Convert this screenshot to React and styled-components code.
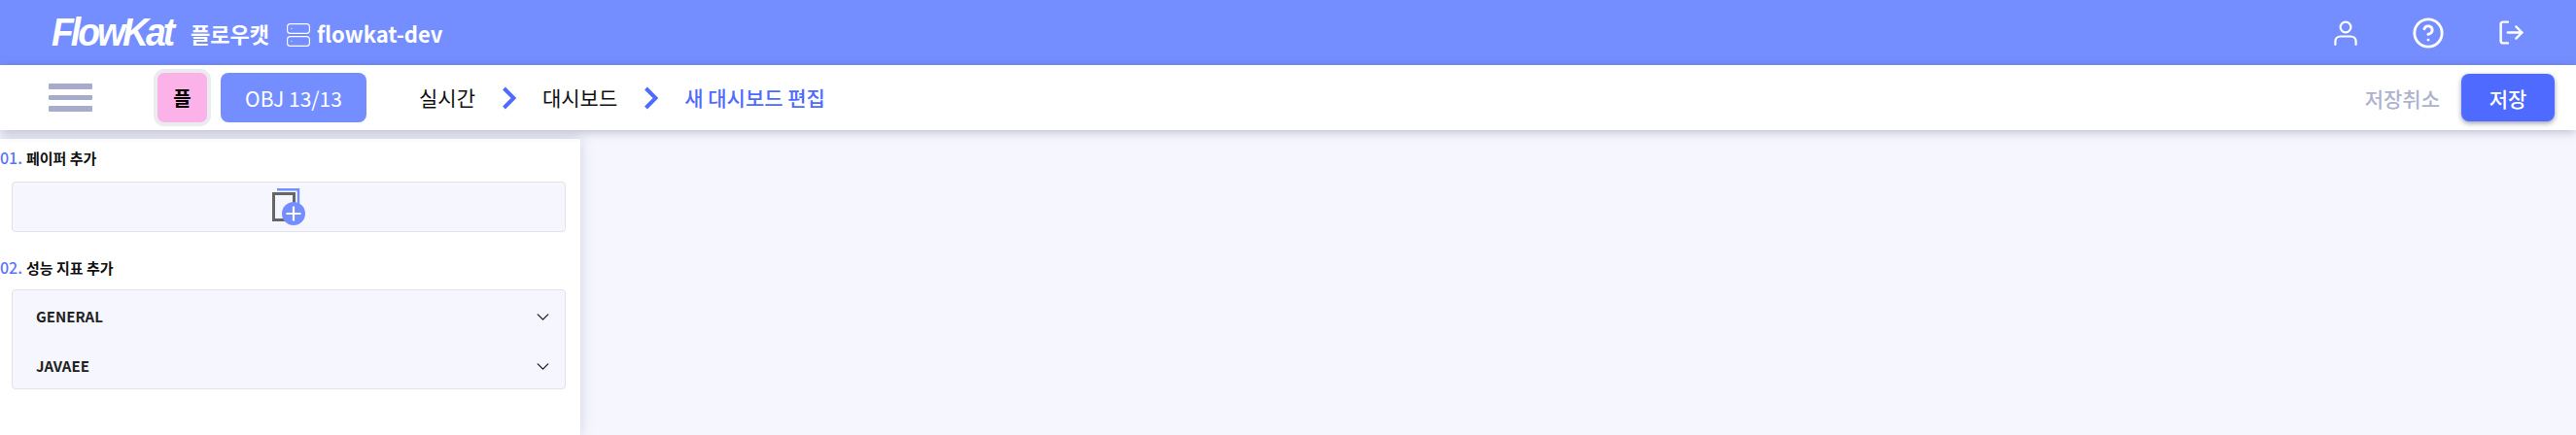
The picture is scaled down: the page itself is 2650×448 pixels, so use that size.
import React from 'react'
import styled, { createGlobalStyle } from 'styled-components'
import { CircleHelp, LogOut, ChevronDown } from 'lucide-react'

const Global = createGlobalStyle`
  html, body {
    margin: 0;
    padding: 0;
    height: 100%;
    overflow: hidden;
    background: #f6f7fe;
  }
  #root {
    height: 100%;
  }
  * {
    box-sizing: border-box;
  }
`

const Page = styled.div`
  width: 2650px;
  height: 448px;
  display: flex;
  flex-direction: column;
  font-family: 'Noto Sans CJK KR', 'Noto Sans', sans-serif;
  background: #f6f7fe;
`

const TopBar = styled.header`
  height: 67px;
  flex: none;
  display: flex;
  align-items: center;
  justify-content: space-between;
  background: #758eff;
  color: #fff;
  padding: 0 52px 0 53px;
`

const Brand = styled.div`
  display: flex;
  align-items: center;
`

const Logo = styled.span`
  font-family: 'Liberation Sans', sans-serif;
  font-style: italic;
  font-weight: 700;
  font-size: 38px;
  letter-spacing: -3px;
  width: 143px;
  transform: scaleX(0.98) scaleY(1.08);
  transform-origin: left center;
  white-space: nowrap;
`

const BrandName = styled.span`
  font-size: 22px;
  font-weight: 700;
  width: 81px;
  white-space: nowrap;
`

const ServerIcon = styled.svg`
  width: 24px;
  height: 24px;
  margin-left: 18px;
  margin-top: 4px;
`

const ProjectName = styled.span`
  font-size: 22px;
  font-weight: 700;
  margin-left: 7px;
`

const TopActions = styled.div`
  display: flex;
  align-items: center;
  gap: 54px;
  line-height: 0;
`

const SubBar = styled.div`
  height: 67px;
  flex: none;
  display: flex;
  align-items: center;
  background: #fff;
  box-shadow: 0 2px 10px rgba(70, 75, 120, 0.35);
  position: relative;
  z-index: 2;
  padding: 0 22px 0 50px;
`

const Hamburger = styled.div`
  width: 45px;
  display: flex;
  flex-direction: column;
  gap: 6px;
  margin-right: 67px;
`

const HamburgerLine = styled.span`
  height: 5.5px;
  border-radius: 1px;
  background: #a7abcc;
`

const Avatar = styled.div`
  width: 51px;
  height: 51px;
  display: flex;
  align-items: center;
  justify-content: center;
  border-radius: 7px;
  background: #fbb2e8;
  box-shadow: 0 0 0 4px #ebecf0;
  font-size: 20px;
  font-weight: 700;
  color: #000;
  margin-right: 14px;
`

const ObjButton = styled.div`
  width: 150px;
  height: 51px;
  display: flex;
  align-items: center;
  justify-content: center;
  border-radius: 8px;
  background: #758eff;
  color: #fff;
  font-size: 21px;
  margin-right: 54px;
`

const Crumbs = styled.nav`
  display: flex;
  align-items: center;
  flex: 1;
`

const Crumb = styled.span`
  font-size: 21px;
  line-height: 30px;
  margin-top: -2px;
  color: ${props => (props.$active ? '#4f6bff' : '#111')};
  font-weight: ${props => (props.$active ? 500 : 400)};
`

const CrumbArrow = styled.svg`
  width: 14px;
  height: 24px;
  margin: 0 27px 0 28px;
`

const CancelText = styled.span`
  font-size: 21px;
  font-weight: 500;
  color: #aeb2cf;
  margin-right: 22px;
`

const SaveButton = styled.button`
  width: 96px;
  height: 49px;
  border: none;
  border-radius: 8px;
  background: #4f6bff;
  color: #fff;
  font-family: inherit;
  font-size: 21px;
  font-weight: 500;
  box-shadow: 0 2px 5px rgba(40, 40, 70, 0.45);
`

const Body = styled.div`
  flex: 1;
  display: flex;
  min-height: 0;
`

const Sidebar = styled.aside`
  width: 597px;
  margin-top: 9px;
  background: #fff;
  box-shadow: 0 0 14px rgba(70, 75, 120, 0.22);
  padding-top: 7px;
`

const SectionTitle = styled.h2`
  margin: 0;
  height: 28px;
  display: flex;
  align-items: baseline;
  gap: 4px;
  font-size: 15px;
  font-weight: 700;
  color: #111;
`

const SectionNo = styled.span`
  font-size: 16px;
  font-weight: 500;
  color: #5a74ff;
`

const AddPageBox = styled.div`
  height: 52px;
  margin: 9px 15px 24px 12px;
  display: flex;
  align-items: center;
  justify-content: center;
  background: #f6f7fe;
  border: 1px solid #e1e2ea;
  border-radius: 4px;
`

const Accordion = styled.div`
  margin: 7px 15px 0 12px;
  padding: 7px 0 3px;
  display: flex;
  flex-direction: column;
  gap: 11px;
  background: #f6f7fe;
  border: 1px solid #e1e2ea;
  border-radius: 4px;
`

const AccordionRow = styled.div`
  height: 40px;
  display: flex;
  align-items: center;
  justify-content: space-between;
  padding: 0 12px 0 24px;
  font-size: 15px;
  font-weight: 700;
  color: #222;
  line-height: 0;
`

const UserIcon = () => (
  <svg width="28" height="28" viewBox="0 0 28 28" fill="none" stroke="#fff" strokeWidth="2.2" strokeLinecap="round">
    <circle cx="14" cy="8" r="5.4" />
    <path d="M3.4 26v-3.5c0-3 2.5-5 5.5-5h10.200c3 0 5.500 2 5.500 5V26" />
  </svg>
)

const AddPageIcon = () => (
  <svg width="34" height="38" viewBox="0 0 34 38">
    <path d="M5 1.250h22v22" fill="none" stroke="#758eff" strokeWidth="2.500" />
    <rect x="1.500" y="5.500" width="21" height="27" fill="#f6f7fe" stroke="#666" strokeWidth="3" />
    <circle cx="22" cy="26" r="12" fill="#758eff" />
    <path d="M22 18.500v15M14.500 26h15" stroke="#fff" strokeWidth="2.200" />
  </svg>
)

const Arrow = () => (
  <CrumbArrow viewBox="0 0 14 24" fill="none" stroke="#4f6bff" strokeWidth="4">
    <path d="M1.500 2l10 10-10 10" />
  </CrumbArrow>
)

const App = () => (
  <Page>
    <Global />
    <TopBar>
      <Brand>
        <Logo>FlowKat</Logo>
        <BrandName>플로우캣</BrandName>
        <ServerIcon viewBox="0 0 24 24" fill="none" stroke="#fff" strokeWidth="1.1">
          <rect x="0.600" y="0.600" width="22.800" height="9.800" rx="3" />
          <rect x="0.600" y="13.600" width="22.800" height="9.800" rx="3" />
          <path d="M4.500 5.500h1M4.500 18.500h1" />
        </ServerIcon>
        <ProjectName>flowkat-dev</ProjectName>
      </Brand>
      <TopActions>
        <UserIcon />
        <CircleHelp size={34} color="#fff" strokeWidth={2} />
        <LogOut size={29} color="#fff" strokeWidth={2} />
      </TopActions>
    </TopBar>
    <SubBar>
      <Hamburger>
        <HamburgerLine />
        <HamburgerLine />
        <HamburgerLine />
      </Hamburger>
      <Avatar>플</Avatar>
      <ObjButton>OBJ 13/13</ObjButton>
      <Crumbs>
        <Crumb>실시간</Crumb>
        <Arrow />
        <Crumb>대시보드</Crumb>
        <Arrow />
        <Crumb $active>새 대시보드 편집</Crumb>
      </Crumbs>
      <CancelText>저장취소</CancelText>
      <SaveButton>저장</SaveButton>
    </SubBar>
    <Body>
      <Sidebar>
        <SectionTitle>
          <SectionNo>01.</SectionNo>
          페이퍼 추가
        </SectionTitle>
        <AddPageBox>
          <AddPageIcon />
        </AddPageBox>
        <SectionTitle>
          <SectionNo>02.</SectionNo>
          성능 지표 추가
        </SectionTitle>
        <Accordion>
          <AccordionRow>
            GENERAL
            <ChevronDown size={21} color="#222" strokeWidth={1.6} />
          </AccordionRow>
          <AccordionRow>
            JAVAEE
            <ChevronDown size={21} color="#222" strokeWidth={1.6} />
          </AccordionRow>
        </Accordion>
      </Sidebar>
    </Body>
  </Page>
)

export default App
